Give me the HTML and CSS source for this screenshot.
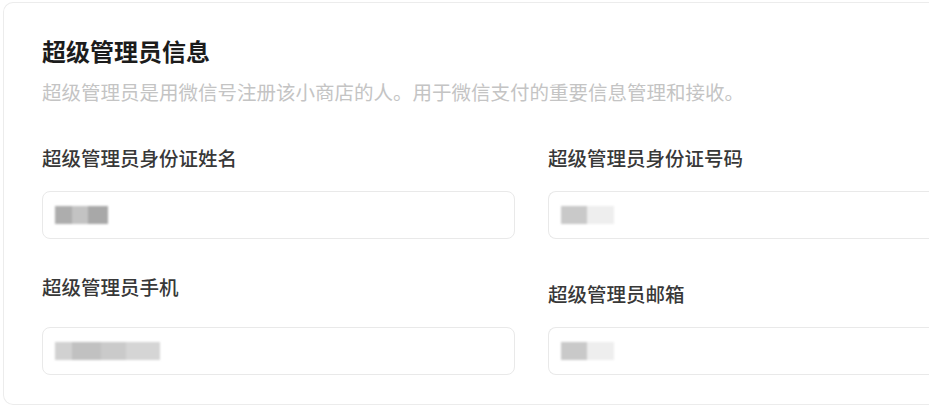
FILE: index.html
```html
<!DOCTYPE html>
<html lang="zh-CN">
<head>
    <meta charset="UTF-8">
    <meta name="viewport" content="width=device-width, initial-scale=1.0">
    <title>超级管理员信息</title>
    <link rel="stylesheet" href="styles.css">
</head>
<body>
    <div class="card">
        <h3 class="card-title">超级管理员信息</h3>
        <p class="card-desc">超级管理员是用微信号注册该小商店的人。用于微信支付的重要信息管理和接收。</p>

        <div class="form-grid">
            <div class="field">
                <label class="field-label">超级管理员身份证姓名</label>
                <div class="input-box"><span class="masked masked-name"></span></div>
            </div>
            <div class="field">
                <label class="field-label">超级管理员身份证号码</label>
                <div class="input-box input-open"><span class="masked masked-short"></span></div>
            </div>
            <div class="field">
                <label class="field-label">超级管理员手机</label>
                <div class="input-box"><span class="masked masked-phone"></span></div>
            </div>
            <div class="field">
                <label class="field-label label-low">超级管理员邮箱</label>
                <div class="input-box input-open"><span class="masked masked-short"></span></div>
            </div>
        </div>
    </div>
</body>
</html>
```

FILE: styles.css
```css
body {
    margin: 0;
    background: #ffffff;
    font-family: "Noto Sans CJK SC", "Noto Sans", sans-serif;
}
/* the card runs on past the right edge of the shot, so it is left open there */
.card {
    margin: 2px 0 0 3px;
    padding: 32px 0 29px 38px;
    border: 1px solid #ececec;
    border-right: none;
    border-radius: 10px 0 0 10px;
    background: #fff;
}
.card-title {
    margin: 0;
    font-size: 24px;
    line-height: 32px;
    font-weight: 700;
    color: #1c1c1c;
}
.card-desc {
    margin: 11px 0 38px;
    font-size: 19.5px;
    line-height: 28px;
    color: #c4c4c4;
}
.form-grid {
    display: grid;
    grid-template-columns: 473px 1fr;
    column-gap: 33px;
    row-gap: 34px;
}
.field {
    display: flex;
    flex-direction: column;
}
.field-label {
    display: block;
    margin-bottom: 19px;
    font-size: 19.5px;
    line-height: 28px;
    font-weight: 500;
    color: #383838;
}
.label-low {
    margin-top: 7px;
}
.input-box {
    margin-top: auto;
    box-sizing: border-box;
    height: 48px;
    padding-left: 12px;
    display: flex;
    align-items: center;
    border: 1px solid #e9e9e9;
    border-radius: 8px;
}
.input-open {
    border-right: none;
    border-radius: 8px 0 0 8px;
}
.masked {
    display: block;
    height: 18px;
    filter: blur(1.2px);
}
.masked-name {
    width: 53px;
    background: linear-gradient(90deg, #adadad 0 33%, #c3c3c3 33% 62%, #a8a8a8 62% 100%);
}
.masked-short {
    width: 53px;
    background: linear-gradient(90deg, #c9c9c9 0 50%, #eeeeee 50% 100%);
}
.masked-phone {
    width: 105px;
    background: linear-gradient(90deg, #d1d1d1 0 16%, #c1c1c1 16% 44%, #cacaca 44% 68%, #d5d5d5 68% 100%);
}
```
